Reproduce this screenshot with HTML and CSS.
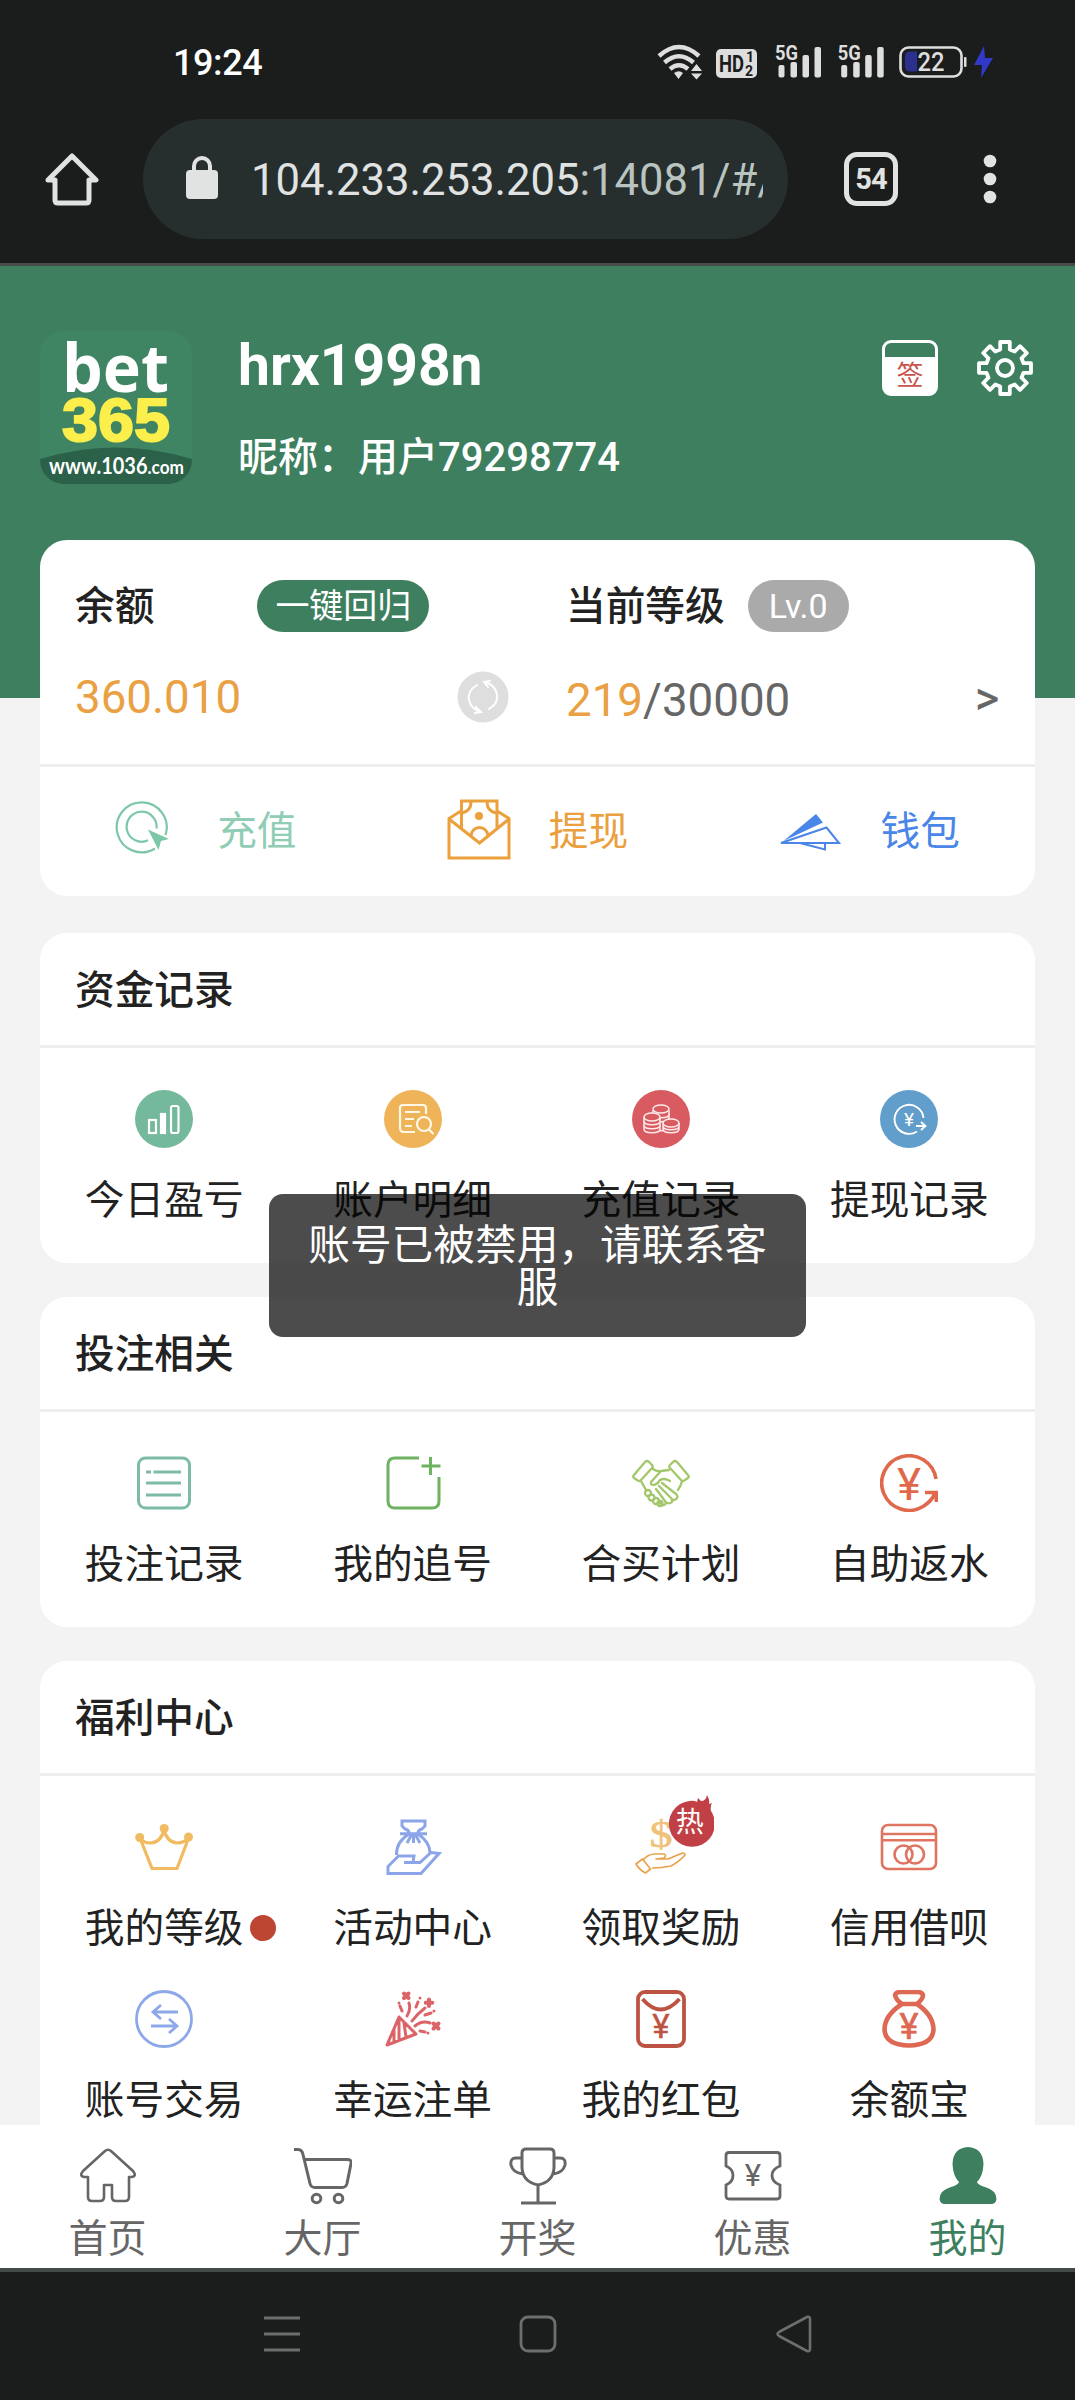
FILE: index.html
```html
<!DOCTYPE html>
<html lang="zh-CN">
<head>
<meta charset="utf-8">
<title>我的</title>
<link rel="stylesheet" href="styles.css">
</head>
<body>
<div class="screen">
  <header class="browser">
    <div class="status">
      <span class="clock">19:24</span>
      <svg class="status-icons" width="345" height="40" viewBox="650 42 345 40">
        <g fill="none" stroke="#dedede" stroke-width="4.4">
          <path d="M659 56Q679 38 699 56"/><path d="M664.500 62.500Q679 50 693.500 62.500"/><path d="M670 69Q679 61.500 688 69"/>
        </g>
        <path fill="#dedede" d="M674 73q5-3.500 9 0l-4.500 6zM691 71l5.500-7 5.500 7zM691 73.500l5.500 6 5.500-6z"/>
        <rect x="716" y="49" width="41" height="29" rx="5" fill="#dedede"/>
        <text class="hd" x="719" y="72" textLength="25" lengthAdjust="spacingAndGlyphs">HD</text>
        <text class="hd-sub" x="746" y="62">1</text><text class="hd-sub" x="745" y="75.500">2</text>
        <g id="sim" fill="#dedede"><text class="net" x="775" y="60" textLength="23" lengthAdjust="spacingAndGlyphs">5G</text>
          <rect x="778.500" y="65" width="6" height="12.500" rx="2"/><rect x="790.500" y="62" width="6.500" height="15.500" rx="2"/><rect x="802.500" y="55" width="6.500" height="22.500" rx="2"/><rect x="814.500" y="47" width="6.500" height="30.500" rx="2"/></g>
        <use href="#sim" x="62.700"/>
        <rect x="900.500" y="47.500" width="61" height="29" rx="8" fill="none" stroke="#dedede" stroke-width="2.600"/>
        <rect x="964" y="57" width="2.500" height="10" rx="1" fill="#dedede"/>
        <path d="M917 51.500v20h-7q-5 0-5-5v-10q0-5 5-5z" fill="#2b2f8e"/>
        <text class="battery" x="917.500" y="71" textLength="27" lengthAdjust="spacingAndGlyphs">22</text>
        <path d="M984 46l-10 19h8l-1 13 12-20h-8z" fill="#3238c8"/>
      </svg>
    </div>
    <div class="address-row">
      <svg class="home" width="54" height="54" viewBox="0 0 54 54"><path d="M3 28L27 4l24 24h-7v20q0 3-3 3H13q-3 0-3-3V28z" fill="none" stroke="#e0e3e2" stroke-width="5" stroke-linejoin="round"/></svg>
      <div class="address">
        <svg width="32" height="44" viewBox="0 0 32 44"><path d="M8 17v-7a8 8 0 0 1 16 0v7" fill="none" stroke="#e0e3e2" stroke-width="4"/><rect y="14" width="32" height="29" rx="4" fill="#e0e3e2"/></svg>
        <span class="url">104.233.253.205<span class="path">:14081/#/</span></span>
      </div>
      <span class="tabs-count">54</span>
      <svg class="dots" width="14" height="50" viewBox="0 0 14 50" fill="#e0e3e2"><circle cx="7" cy="7" r="6.300"/><circle cx="7" cy="25" r="6.300"/><circle cx="7" cy="43" r="6.300"/></svg>
    </div>
  </header>

  <main class="page">
    <section class="profile">
      <svg class="logo" width="152" height="153" viewBox="0 0 152 153">
        <clipPath id="logo-clip"><rect width="152" height="153" rx="24"/></clipPath>
        <g clip-path="url(#logo-clip)"><rect width="152" height="153" fill="#3f8563"/><path d="M0 128Q76 105 152 128V153H0z" fill="#2b6149"/></g>
        <text class="logo-bet" x="22" y="61" textLength="107" lengthAdjust="spacingAndGlyphs">bet</text>
        <text class="logo-365" x="22" y="110" textLength="108" lengthAdjust="spacingAndGlyphs">365</text>
        <text class="logo-url" x="9" y="143" textLength="135" lengthAdjust="spacingAndGlyphs">www.1036<tspan class="logo-com">.com</tspan></text>
      </svg>
      <div class="who"><h1>hrx1998n</h1><p>昵称：用户79298774</p></div>
      <div class="tools">
        <span class="sign">签</span>
        <svg width="56" height="56" viewBox="-28 -28 56 56" fill="none" stroke="#fff" stroke-width="3.800" stroke-linejoin="round"><path d="M-4.800-18.500L-4.800-26 4.800-26 4.800-18.500 9.700-16.500 15-21.800 21.800-15 16.500-9.700 18.500-4.800 26-4.800 26 4.800 18.500 4.800 16.500 9.700 21.800 15 15 21.800 9.700 16.500 4.800 18.500 4.800 26-4.800 26-4.800 18.500-9.700 16.500-15 21.800-21.800 15-16.500 9.700-18.500 4.800-26 4.800-26-4.800-18.500-4.800-16.500-9.700-21.800-15-15-21.800-9.700-16.500z"/><circle r="8"/></svg>
      </div>
    </section>

    <div class="cards">
      <section class="card wallet">
        <div class="summary">
          <div class="balance">
            <div class="line"><b>余额</b><span class="pill back">一键回归</span></div>
            <div class="line amount"><span class="gold">360.010</span>
              <svg width="52" height="52" viewBox="0 0 52 52"><circle cx="26" cy="26" r="25.500" fill="#dedede"/><g fill="none" stroke="#fff" stroke-width="2" stroke-linecap="round"><path d="M20 14Q10 20 12 29q2 9 12 12m-5-5l5 5-6 1M32 38q10-6 8-15-2-9-12-12m5-1l-6 1 4 5"/></g></svg>
            </div>
          </div>
          <div class="level">
            <div class="line"><b>当前等级</b><span class="pill lv">Lv.0</span></div>
            <div class="line progress"><span><span class="gold">219</span>/30000</span><span class="more">&gt;</span></div>
          </div>
        </div>
        <div class="actions">
          <a class="action deposit"><svg width="64" height="64" viewBox="0 0 64 64" fill="none" stroke="#7cc7a8" stroke-width="2.200"><path d="M40 50.500A25 25 0 1 1 50.500 37M33 42.300A15 15 0 1 1 41.500 30.500"/><path d="M33 31.500l21 9.500-8 2-2.500 9z" fill="#7cc7a8" stroke="none"/></svg>充值</a>
          <a class="action withdraw"><svg width="64" height="64" viewBox="0 0 64 64" fill="none" stroke="#eba03c" stroke-width="3"><path d="M14 13L2 20.500V60h60V20.500L50 13M2 21l30.500 24L62 21M14.500 31V3h35.500v28"/><path d="M24 4q0 9-9 11M40 4q0 9 9 11M24 38a8.500 8.500 0 0 1 17 0"/><circle cx="32" cy="18" r="4" fill="#eba03c" stroke="none"/></svg>提现</a>
          <a class="action purse"><svg width="64" height="64" viewBox="0 0 64 64"><path d="M38 16l7 8.500L5.500 43z" fill="#4a86e8"/><path d="M3 45L48.500 29.500 61 45zM22 45l25 6.500V45" fill="none" stroke="#4a86e8" stroke-width="2"/></svg>钱包</a>
        </div>
      </section>

      <section class="card">
        <h2>资金记录</h2>
        <div class="grid">
          <a class="item"><svg class="icon" viewBox="0 0 58 58"><circle cx="29" cy="29" r="29" fill="#74b99b"/><g fill="none" stroke="#fff" stroke-width="2.200"><rect x="14" y="30" width="7" height="13"/><rect x="26" y="24" width="4" height="19" fill="#fff"/><rect x="36" y="16" width="7.500" height="27" rx="2"/></g></svg><span>今日盈亏</span></a>
          <a class="item"><svg class="icon" viewBox="0 0 58 58"><circle cx="29" cy="29" r="29" fill="#efb459"/><g fill="none" stroke="#fff8e6" stroke-width="2.200"><path d="M31 42H20q-4 0-4-4V18q0-3 3-3h20q3 0 3 3v6M21 22h15M21 29h9M21 36h7"/><circle cx="40" cy="34" r="7"/><path d="M44.500 39l5 5"/></g></svg><span>账户明细</span></a>
          <a class="item"><svg class="icon" viewBox="0 0 58 58"><circle cx="29" cy="29" r="29" fill="#d85b61"/><g fill="#d85b61" stroke="#ffe9e9" stroke-width="1.500"><path d="M21 20v17c0 5 16 5 16 0V20"/><path d="M21 24c0 5 16 5 16 0M21 28c0 5 16 5 16 0"/><ellipse cx="29" cy="19" rx="8" ry="4"/><path d="M12 27v12c0 5 16 5 16 0V27"/><path d="M12 31c0 5 16 5 16 0M12 35c0 5 16 5 16 0"/><ellipse cx="20" cy="27" rx="8" ry="4"/><path d="M31 33v6c0 5 16 5 16 0v-6M31 36c0 5 16 5 16 0"/><ellipse cx="39" cy="33" rx="8" ry="4"/></g></svg><span>充值记录</span></a>
          <a class="item"><svg class="icon" viewBox="0 0 58 58"><circle cx="29" cy="29" r="29" fill="#619ecb"/><g fill="none" stroke="#fff" stroke-width="1.900"><path d="M37 41.500A14.500 14.500 0 1 1 43.500 28M36 36h9m-4-4l4.500 4-4.500 4"/></g><text class="yen" x="29" y="36" font-size="19" fill="#fff">¥</text></svg><span>提现记录</span></a>
        </div>
      </section>

      <section class="card">
        <h2>投注相关</h2>
        <div class="grid">
          <a class="item"><svg class="icon" viewBox="0 0 58 58" fill="none" stroke="#7dbba5" stroke-width="3"><rect x="3.500" y="4" width="51" height="50" rx="7"/><path d="M11 18h5m2.500 0H46M11 29h35M11 41h35"/></svg><span>投注记录</span></a>
          <a class="item"><svg class="icon" viewBox="0 0 58 58" fill="none" stroke="#6fb261" stroke-width="3"><path d="M35 4H11q-7 0-7 7v36q0 7 7 7h37q7 0 7-7V23M46.500 3v18M37.500 12h19"/></svg><span>我的追号</span></a>
          <a class="item"><svg class="icon" viewBox="0 0 58 58" fill="none" stroke="#a3c76a" stroke-width="2.300" stroke-linejoin="round" stroke-linecap="round"><path d="M2 21L13 8q2-2 4 0l3 3q1.500 1.500 0 3L9 26q-2 2-4 0l-3-2q-1.500-1.500 0-3zM56 21L45 8q-2-2-4 0l-3 3q-1.500 1.500 0 3l11 12q2 2 4 0l3-2q1.500-1.500 0-3z"/><path d="M21 15q4 3 8 2l8-1M9 27l5 9M50 27q-1 5-4 9M29 17L19 28q-1 3 3 3 4-1 6-5 4-2 8 0l2 1-2-1M30 29l14 11q3 3 0 5-2 2-4 0M27 32l12 12q3 4-1 5-2 1-4-1M24 35l9 12q2 3-1 4-2 1-4-2"/><circle cx="16" cy="39" r="3"/><circle cx="19.500" cy="43.500" r="3"/><circle cx="24" cy="47" r="3"/><circle cx="28" cy="49.500" r="2.500"/></svg><span>合买计划</span></a>
          <a class="item"><svg class="icon" viewBox="0 0 58 58" fill="none" stroke="#e0694c" stroke-width="3.600"><path d="M56 25A27.300 27.300 0 1 0 43 52.500Q52 47 55 39M45 38.500h11.300V48"/><text class="yen" x="29" y="45.500" font-size="45" fill="#e0694c" stroke="none" textLength="24" lengthAdjust="spacingAndGlyphs">¥</text></svg><span>自助返水</span></a>
        </div>
      </section>

      <section class="card">
        <h2>福利中心</h2>
        <div class="grid">
          <a class="item"><svg class="icon" viewBox="0 0 58 58" fill="none" stroke="#f0bb61" stroke-width="3.200"><path d="M5 20l12 30.500h25L54 19M5 20q3 5 11 5 10-1 13-13 3 12 13 13 7 0 11-5"/><g fill="#f0bb61" stroke="none"><circle cx="4.700" cy="19.500" r="4.500"/><circle cx="29.200" cy="10.500" r="4.500"/><circle cx="53.500" cy="19" r="4.500"/></g></svg><span>我的等级<i class="dot"></i></span></a>
          <a class="item"><svg class="icon" viewBox="0 0 58 58" fill="none" stroke="#8ba5e8" stroke-width="3"><path d="M25 15Q25 12 21 11L18 8V3h23v5l-3 3q-4 1-4 4M16 15.700h27M25 16Q12 24 12.500 37M34 16q12 8 12 19M29.500 16v9M28 16l-5 9M31 16l5 9"/><path d="M20 44.500h16L47 34.500l8 1L37 55.500H4V48.500L14.500 38H30l-1 6"/></svg><span>活动中心</span></a>
          <a class="item"><svg class="icon" viewBox="0 0 58 58" fill="none" stroke="#e8a24a" stroke-width="1.700" stroke-linejoin="round"><text class="dollar" x="29" y="28.500" textLength="23" lengthAdjust="spacingAndGlyphs">$</text><path d="M4 46l6.500-5 8 10-5 4q-6-3-9.500-9zM11 42q5-6 12-6h9q3 1 0 4l-8 1h12l12-5q5-2 5 1-5 6-14 11-9 2-19 2"/></svg><span class="badge"><svg width="48" height="52" viewBox="0 0 48 52"><path d="M23 6q5-1 8 1l1-4 3 3q5 0 6-6 3 5 2 9l3-1q-2 3-1 8a23 23 0 1 1-22-10z" fill="#c14045"/></svg><em>热</em></span><span>领取奖励</span></a>
          <a class="item"><svg class="icon" viewBox="0 0 58 58" fill="none" stroke="#df7460" stroke-width="2.600"><rect x="2" y="7" width="54" height="44" rx="6"/><path d="M2 16h54M2 22.300h54"/><circle cx="23.500" cy="36.500" r="9"/><circle cx="35" cy="36.500" r="9"/></svg><span>信用借呗</span></a>
          <a class="item"><svg class="icon" viewBox="0 0 58 58" fill="none" stroke="#8da8e8" stroke-width="2.800"><circle cx="29" cy="29" r="27.500"/><path d="M43 22H18m8-7l-8 7 8 7M16 36h26m-8-7l8 7-8 7"/></svg><span>账号交易</span></a>
          <a class="item"><svg class="icon" viewBox="0 0 58 58" fill="none" stroke="#db6468" stroke-width="3" stroke-linecap="round"><path d="M3 55l12-28 17 17zM10 39v13M15 30v20M20 33l2 14" stroke-linejoin="round"/><path d="M23 26q4-6 2-13M28 31q5-7 13-13M31 36q7-6 15-3M18 21l-2-5M32 17l2-5M41 25l6-2M36 41l5 1M15 13v.1M36 8v.1M50 21v.1M44 43v.1"/><path d="M20 3.500l4.500 4.500m0-4.500L20 8M45 9.500v6.500m-3.300-3.200h6.600M49.500 33.500l5 5m0-5l-5 5" stroke-width="4"/></svg><span>幸运注单</span></a>
          <a class="item"><svg class="icon" viewBox="0 0 58 58" fill="none" stroke="#bd5443" stroke-width="3.800"><rect x="6" y="2" width="46" height="54" rx="7"/><path d="M10.500 9q18 21 37 0"/><text class="yen" x="29" y="48" font-size="33" fill="#bd5443" stroke="#bd5443" stroke-width=".4">¥</text></svg><span>我的红包</span></a>
          <a class="item"><svg class="icon" viewBox="0 0 58 58" fill="none" stroke="#dd6853" stroke-width="4.600" stroke-linejoin="round"><path d="M22 14h15q6-5 6-9-1-3-6-3H21q-5 0-6 3 1 5 7 9Q5 25 4.500 39 5 55 29 55.500 53 55 53.500 39 53 25 37 14"/><text class="yen" x="29" y="49" font-size="36" fill="#dd6853" stroke="#dd6853" stroke-width=".6">¥</text></svg><span>余额宝</span></a>
        </div>
      </section>
    </div>
    <div class="toast">账号已被禁用，请联系客服</div>
  </main>

  <nav class="tabbar">
    <a><svg class="icon" viewBox="0 0 58 58" fill="none" stroke="#666" stroke-width="2.600" stroke-linejoin="round"><path d="M26 4q3-2.500 6 0l22 20q4 5-1 6h-3v20q0 4-4 4H37q-4 0-4-4V38h-8v12q0 4-4 4h-8q-4 0-4-4V30H5q-5-1-1-6z"/></svg>首页</a>
    <a><svg class="icon" viewBox="0 0 58 58" fill="none" stroke="#666" stroke-width="3"><path d="M0 2.500h4q4 0 5 5l7 29q1 4 5 4h27q4 0 5-4l4-20q1-4-4-4H10.500"/><circle cx="22.500" cy="51.500" r="4.300"/><circle cx="44.500" cy="51.500" r="4.300"/></svg>大厅</a>
    <a><svg class="icon" viewBox="0 0 58 58" fill="none" stroke="#666" stroke-width="3"><path d="M13 6q0-4 4-4h24q4 0 4 4v15q-1 14-16 17-15-3-16-17zM29 38v18M12 56h35M13 11H7q-6 0-5 7 2 8 12 9M45 11h6q6 0 5 7-2 8-12 9"/></svg>开奖</a>
    <a><svg class="icon" viewBox="0 0 58 58" fill="none" stroke="#666" stroke-width="2.800"><path d="M5 5.500h48q3 0 3 3V19q-8 3-8 9.500T56 38v11q0 3-3 3H5q-3 0-3-3V38q7-3 7-9.500T2 19V8.500q0-3 3-3z"/><text class="yen" x="29" y="39" font-size="31" fill="#666" stroke="none">¥</text></svg>优惠</a>
    <a class="active"><svg class="icon" viewBox="0 0 58 58" fill="#3d7f5f"><path d="M29 0q15 1 15.500 17-.5 12-6.500 18 1 3 8 5 11 3 11.500 12-.5 5-5.500 5H6q-5 0-5.500-5Q1 43 12 40q7-2 8-5-6-6-6.500-18Q14 1 29 0z"/></svg>我的</a>
  </nav>

  <footer class="sysnav">
    <svg width="38" height="38" viewBox="0 0 38 38" stroke="#6d6f6e" stroke-width="2.800"><path d="M1 3h36M1 19h36M1 35h36"/></svg>
    <svg width="38" height="38" viewBox="0 0 38 38" fill="none" stroke="#6d6f6e" stroke-width="2.800"><rect x="2" y="2" width="34" height="34" rx="7"/></svg>
    <svg width="38" height="38" viewBox="0 0 38 38" fill="none" stroke="#6d6f6e" stroke-width="2.600" stroke-linejoin="round"><path d="M4 17L32 2q3-1 3 2v30q0 3-3 2L4 21q-3-2 0-4z"/></svg>
  </footer>
</div>
</body>
</html>
```
FILE: styles.css
```css
* { box-sizing: border-box; margin: 0; padding: 0; }
body { width: 1075px; font-family: Roboto, "Noto Sans CJK SC", sans-serif; color: #222; background: #f3f3f3; }
svg { display: block; flex: none; }
.screen { width: 1075px; height: 2400px; display: flex; flex-direction: column; overflow: hidden; }

.browser { flex: none; height: 266px; background: #1b1d1c; border-bottom: 3px solid #474c48; }
.status { height: 119px; padding: 42px 80px 0 173px; display: flex; justify-content: space-between; }
.clock { font-size: 36px; font-weight: 500; line-height: 43px; color: #fff; letter-spacing: -.4px; }
.hd { font-size: 24px; font-weight: 700; fill: #1b1d1c; }
.hd-sub { font-size: 14px; font-weight: 700; fill: #1b1d1c; }
.net { font-size: 20px; font-weight: 700; }
.battery { font-size: 25px; font-weight: 500; fill: #dedede; }
.address-row { height: 120px; display: flex; align-items: center; padding-left: 45px; }
.address { width: 645px; height: 120px; margin: 0 56px 0 44px; padding-left: 43px; border-radius: 60px; background: #262e2e; display: flex; align-items: center; gap: 33px; }
.address svg { margin-top: -3px; }
.url { width: 512px; overflow: hidden; white-space: nowrap; font-size: 43.600px; line-height: 60px; padding-top: 4px; color: #e0e3e2; }
.url .path { color: #b9c4c0; }
.tabs-count { width: 54px; height: 54px; border: 5px solid #e0e3e2; border-radius: 13px; color: #e0e3e2; font-size: 29px; font-weight: 700; line-height: 45px; text-align: center; letter-spacing: -1px; }
.dots { margin-left: 85px; }

.page { position: relative; flex: 1; min-height: 0; overflow: hidden; }
.profile { height: 432px; padding: 65px 40px 0; background: #3d7f5f; display: flex; align-items: flex-start; color: #fff; }
.logo-bet { font: 700 67px "Open Sans", sans-serif; fill: #fff; }
.logo-365 { font: 700 62px "Liberation Sans", sans-serif; fill: #fcee4b; stroke: #fcee4b; stroke-width: 2px; }
.logo-url { font: 700 22px Lato, sans-serif; fill: #fff; }
.logo-com { font-size: 19px; }
.who { margin-left: 46px; flex: 1; }
.who h1 { font-size: 57px; line-height: 70px; }
.who p { margin-top: 29px; font-size: 40px; font-weight: 500; line-height: 56px; }
.tools { display: flex; gap: 39px; padding: 9px 2px 0 0; }
.sign { width: 56px; height: 56px; border: 3px solid #fff; border-radius: 9px; background: linear-gradient(#3d7f5f 14px, #fff 14px); color: #c8554c; font-size: 27px; line-height: 66px; text-align: center; }

.cards { margin-top: -158px; padding: 0 40px; display: flex; flex-direction: column; gap: 34px; }
.card { border-radius: 27px; background: #fff; width: 995px; }
.wallet { height: 356px; margin-bottom: 3px; }
.summary { height: 227px; border-bottom: 3px solid #eee; padding: 40px 36px 0 35px; display: flex; }
.balance { width: 434px; margin-right: 57px; }
.level { flex: 1; }
.line { display: flex; align-items: center; height: 52px; font-size: 39.700px; }
.line b { font-weight: 500; margin-top: -7px; }
.pill { height: 52px; border-radius: 26px; color: #fff; font-size: 34px; line-height: 52px; text-align: center; }
.back { width: 172px; margin-left: 103px; background: #3d7f5f; }
.lv { width: 101px; margin-left: 23px; background: #aaa; }
.amount, .progress { justify-content: space-between; font-size: 45.700px; margin-top: 39px; color: #666; }
.progress { margin-top: 43px; }
.progress > span { margin-top: -1px; }
.gold { color: #e9a143; }
.progress .more { font-size: 46px; margin-top: -6px; -webkit-text-stroke: .5px #666; }
.actions { height: 129px; display: grid; grid-template-columns: repeat(3, 1fr); padding-bottom: 9px; }
.action { display: flex; align-items: center; justify-content: center; gap: 38px; font-size: 39.700px; }
.action svg { position: relative; top: 3px; }
.deposit { color: #90cdb4; }
.withdraw { color: #eaa03c; }
.purse { color: #4a86e8; }

.card h2 { height: 115px; border-bottom: 3px solid #eee; padding-left: 35px; font-size: 39.700px; font-weight: 500; line-height: 116px; }
.grid { display: grid; grid-template-columns: repeat(4, 248.400px); row-gap: 41px; padding: 42px 0; }
.item { position: relative; display: flex; flex-direction: column; align-items: center; gap: 27px; font-size: 39.700px; line-height: 46px; }
.icon { width: 58px; height: 58px; }
.item > span { position: relative; top: 3px; white-space: nowrap; }
.dot { position: absolute; left: 165px; top: 9px; width: 26px; height: 26px; border-radius: 50%; background: #bd4632; }
.item .badge { position: absolute; left: 129px; top: -23px; width: 48px; height: 52px; }
.badge em { position: absolute; inset: 4px 0 0; font-size: 28px; font-style: normal; line-height: 48px; text-align: center; color: #fff; }
.yen { font-family: Roboto, sans-serif; text-anchor: middle; }
.dollar { font: 38px "Liberation Serif", serif; fill: #f0c178; stroke: #f0c178; stroke-width: .6px; text-anchor: middle; }

.toast { position: absolute; left: 269px; top: 928px; width: 537px; height: 143px; padding: 31px 38px; border-radius: 14px; background: rgba(0, 0, 0, .7); color: #fff; font-size: 41.700px; line-height: 42px; text-align: center; }

.tabbar { flex: none; height: 143px; background: #fff; display: grid; grid-template-columns: repeat(5, 1fr); padding-top: 22px; }
.tabbar a { display: flex; flex-direction: column; align-items: center; gap: 10px; font-size: 39px; line-height: 48px; color: #666; }
.tabbar .active { color: #3d7f5f; }
.sysnav { flex: none; height: 132px; background: #1b1d1c; border-top: 4px solid #434b47; display: flex; justify-content: center; gap: 218px; padding-top: 43px; }
```
